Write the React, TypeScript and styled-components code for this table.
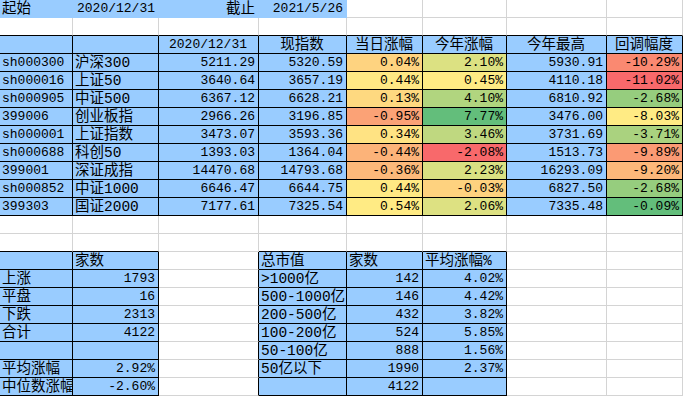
import React from 'react';
import styled, { createGlobalStyle } from 'styled-components';

const BLUE = '#99ccff';
const GRID = '#d4d4d4';
const LINE = '#000000';

// column widths of the sheet, A..H
const COLS = [73, 86, 100, 88, 76, 84, 100, 76];

type Align = 'left' | 'right' | 'center';

interface CellData {
  v?: string;
  a?: Align;
  bg?: string;
}

const GlobalStyle = createGlobalStyle`
  html, body {
    margin: 0;
    padding: 0;
    background: #fff;
  }
  body {
    font-family: "Liberation Mono", "Noto Sans CJK SC", monospace;
    color: #000;
  }
`;

const Sheet = styled.div`
  display: grid;
  grid-template-columns: ${COLS.map(w => `${w}px`).join(' ')};
  grid-auto-rows: 18px;
  width: 683px;
  height: 397px;
  overflow: hidden;
  background: #fff;
`;

const Cell = styled.div<{
  $bg: string;
  $align: Align;
  $right: string;
  $bottom: string;
  $cjk: boolean;
}>`
  box-sizing: border-box;
  background: ${p => p.$bg};
  border-right: 1px solid ${p => p.$right};
  border-bottom: 1px solid ${p => p.$bottom};
  padding: 0 3px 0 2px;
  text-align: ${p => p.$align};
  font-size: ${p => (p.$cjk ? '14.5px' : '13px')};
  line-height: 18px;
  white-space: nowrap;
  overflow: hidden;
`;

const t = (v: string, a: Align = 'left', bg?: string): CellData => ({ v, a, bg });
const n = (v: string, bg?: string): CellData => ({ v, a: 'right', bg });
const e: CellData = {};

const indices: [string, string, string, string, string, string, string, string, string, string, string][] = [
  ['sh000300', '沪深300', '5211.29', '5320.59', '0.04%', '#fed380', '2.10%', '#dce182', '5930.91', '-10.29%', '#fa8971'],
  ['sh000016', '上证50', '3640.64', '3657.19', '0.44%', '#ffe984', '0.45%', '#ffeb84', '4110.18', '-11.02%', '#f8696b'],
  ['sh000905', '中证500', '6367.12', '6628.21', '0.13%', '#fed980', '4.10%', '#b1d57f', '6810.92', '-2.68%', '#96cd7e'],
  ['399006', '创业板指', '2966.26', '3196.85', '-0.95%', '#fba276', '7.77%', '#63be7b', '3476.00', '-8.03%', '#ffeb84'],
  ['sh000001', '上证指数', '3473.07', '3593.36', '0.34%', '#ffe383', '3.46%', '#bfd880', '3731.69', '-3.71%', '#aad27f'],
  ['sh000688', '科创50', '1393.03', '1364.04', '-0.44%', '#fcb379', '-2.08%', '#f8696b', '1513.73', '-9.89%', '#fb9a74'],
  ['399001', '深证成指', '14470.68', '14793.68', '-0.36%', '#fcb97a', '2.23%', '#d9e082', '16293.09', '-9.20%', '#fcb87a'],
  ['sh000852', '中证1000', '6646.47', '6644.75', '0.44%', '#ffe984', '-0.03%', '#fed27f', '6827.50', '-2.68%', '#96cd7e'],
  ['399303', '国证2000', '7177.61', '7325.54', '0.54%', '#ffeb84', '2.06%', '#dde182', '7335.48', '-0.09%', '#63be7b'],
];

const empty = (): CellData[] => Array.from({ length: 8 }, () => e);

const rows: CellData[][] = [
  [t('起始', 'left', BLUE), n('2020/12/31', BLUE), n('截止', BLUE), n('2021/5/26', BLUE), e, e, e, e],
  empty(),
  [
    t('', 'left', BLUE),
    t('', 'left', BLUE),
    t('2020/12/31', 'center', BLUE),
    t('现指数', 'center', BLUE),
    t('当日涨幅', 'center', BLUE),
    t('今年涨幅', 'center', BLUE),
    t('今年最高', 'center', BLUE),
    t('回调幅度', 'center', BLUE),
  ],
  ...indices.map(r => [
    t(r[0], 'left', BLUE),
    t(r[1], 'left', BLUE),
    n(r[2], BLUE),
    n(r[3], BLUE),
    n(r[4], r[5]),
    n(r[6], r[7]),
    n(r[8], BLUE),
    n(r[9], r[10]),
  ]),
  empty(),
  empty(),
  [t('', 'left', BLUE), t('家数', 'left', BLUE), e, t('总市值', 'left', BLUE), t('家数', 'left', BLUE), t('平均涨幅%', 'left', BLUE), e, e],
  [t('上涨', 'left', BLUE), n('1793', BLUE), e, t('>1000亿', 'left', BLUE), n('142', BLUE), n('4.02%', BLUE), e, e],
  [t('平盘', 'left', BLUE), n('16', BLUE), e, t('500-1000亿', 'left', BLUE), n('146', BLUE), n('4.42%', BLUE), e, e],
  [t('下跌', 'left', BLUE), n('2313', BLUE), e, t('200-500亿', 'left', BLUE), n('432', BLUE), n('3.82%', BLUE), e, e],
  [t('合计', 'left', BLUE), n('4122', BLUE), e, t('100-200亿', 'left', BLUE), n('524', BLUE), n('5.85%', BLUE), e, e],
  [t('', 'left', BLUE), t('', 'left', BLUE), e, t('50-100亿', 'left', BLUE), n('888', BLUE), n('1.56%', BLUE), e, e],
  [t('平均涨幅', 'left', BLUE), n('2.92%', BLUE), e, t('50亿以下', 'left', BLUE), n('1990', BLUE), n('2.37%', BLUE), e, e],
  [t('中位数涨幅', 'left', BLUE), n('-2.60%', BLUE), e, t('', 'left', BLUE), n('4122', BLUE), t('', 'left', BLUE), e, e],
];

// cells that carry thin black borders
const boxed = (r: number, c: number) =>
  (r >= 2 && r <= 11 && c >= 0 && c <= 7) ||
  (r >= 14 && r <= 21 && (c === 0 || c === 1 || (c >= 3 && c <= 5)));

const hasCjk = (s?: string) => !!s && /[\u3400-\u9fff]/.test(s);

export default function App() {
  return (
    <>
      <GlobalStyle />
      <Sheet>
        {rows.map((row, r) =>
          row.map((cell, c) => {
            const bg = cell.bg || '#ffffff';
            const right = boxed(r, c) || boxed(r, c + 1) ? LINE : cell.bg ? cell.bg : GRID;
            const bottom = boxed(r, c) || boxed(r + 1, c) ? LINE : cell.bg ? cell.bg : GRID;
            return (
              <Cell
                key={`${r}-${c}`}
                $bg={bg}
                $align={cell.a || 'left'}
                $right={right}
                $bottom={bottom}
                $cjk={hasCjk(cell.v)}
              >
                {cell.v}
              </Cell>
            );
          })
        )}
      </Sheet>
    </>
  );
}
